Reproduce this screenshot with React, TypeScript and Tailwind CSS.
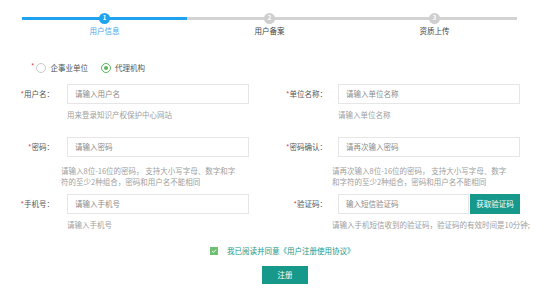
import React from 'react';

const font = { fontFamily: '"Noto Sans CJK SC", "Noto Sans", sans-serif' };

const steps = ['用户信息', '用户备案', '资质上传'];

const Stepper: React.FC = () => (
    <div className="ml-[22px] w-[495px] pt-[13px] flex">
        {steps.map((s, i) => {
            const active = i === 0;
            return (
                <div key={s} className="flex-1 flex flex-col items-center">
                    <div className="relative w-full h-[10px] flex items-center justify-center">
                        <div className={`absolute left-0 right-0 top-[3.5px] h-[3px] ${active ? 'bg-[#1fa3ee]' : 'bg-[#d3d3d3]'}`} />
                        <div className={`relative w-[11px] h-[11px] rounded-full flex items-center justify-center text-white text-[6px] leading-none font-bold ${active ? 'bg-[#1fa3ee]' : 'bg-[#cfcfcf]'}`}>
                            {i + 1}
                        </div>
                    </div>
                    <div className={`mt-[2px] text-[7.5px] leading-[12px] ${active ? 'text-[#4aa8ee]' : 'text-[#444]'}`}>{s}</div>
                </div>
            );
        })}
    </div>
);

const Star = () => <span className="text-[#e4393c]">*</span>;

// one form field: label + input + optional help text (lines broken as in the design)
const Field: React.FC<{
    label: string;
    placeholder: string;
    help?: string[];
    right?: boolean;
    button?: boolean;
    helpShift?: boolean;
}> = ({ label, placeholder, help, right, button, helpShift }) => (
    <div className="flex items-start">
        <div className={`${right ? 'w-[56px]' : 'w-[54px]'} h-[20px] flex items-center justify-end text-[7.5px] text-[#555] whitespace-nowrap`}>
            <Star />{label}：
        </div>
        <div className={`${right ? 'ml-[11px]' : 'ml-[13px]'} flex flex-col`}>
            <div className="flex w-[182px] h-[20px]">
                <div className="flex-1 border border-[#e6e6e6] bg-white flex items-center pl-[7px] text-[7.5px] text-[#8a8a8a]">
                    {placeholder}
                </div>
                {button && (
                    <div className="w-[50px] bg-[#16998a] text-white text-[7.5px] flex items-center justify-center ml-[1px]">
                        获取验证码
                    </div>
                )}
            </div>
            {help && (
                <div className={`${help.length > 1 ? 'mt-[8px]' : 'mt-[5px]'} text-[7.5px] leading-[11px] text-[#a0a0a0] whitespace-nowrap ${helpShift ? '-ml-[6px]' : ''}`}>
                    {help.map((l) => (
                        <div key={l}>{l}</div>
                    ))}
                </div>
            )}
        </div>
    </div>
);

const App: React.FC = () => {
    return (
        <div className="w-[554px] h-[288px] bg-white overflow-hidden" style={font}>
            <Stepper />

            {/* unit type radios */}
            <div className="mt-[25px] pl-[31px] flex items-center text-[7.5px] text-[#555] h-[12px]">
                <span className="text-[#e4393c] self-start -mt-[2px] mr-[1px]">*</span>
                <span className="w-[10px] h-[10px] rounded-full border border-[#c9c9c9] bg-white" />
                <span className="ml-[5px]">企事业单位</span>
                <span className="ml-[13px] w-[10px] h-[10px] rounded-full border border-[#5cb85c] flex items-center justify-center">
                    <span className="w-[4px] h-[4px] rounded-full bg-[#5cb85c]" />
                </span>
                <span className="ml-[4px]">代理机构</span>
            </div>

            <div className="mt-[10px] grid grid-cols-[270px_284px]">
                <div className="pb-[17px]">
                    <Field label="用户名" placeholder="请输入用户名" help={['用来登录知识产权保护中心网站']} />
                </div>
                <div className="pl-[1px] pb-[17px]">
                    <Field right label="单位名称" placeholder="请输入单位名称" help={['请输入单位名称']} />
                </div>

                <div className="pb-[7px]">
                    <Field label="密码" placeholder="请输入密码" helpShift help={['请输入8位-16位的密码， 支持大小写字母、数字和字', '符的至少2种组合，密码和用户名不能相同']} />
                </div>
                <div className="pl-[1px] pb-[7px]">
                    <Field right label="密码确认" placeholder="请再次输入密码" helpShift help={['请再次输入8位-16位的密码， 支持大小写字母、数字', '和字符的至少2种组合，密码和用户名不能相同']} />
                </div>

                <Field label="手机号" placeholder="请输入手机号" help={['请输入手机号']} />
                <div className="pl-[1px]">
                    <Field right button label="验证码" placeholder="输入短信验证码" helpShift help={['请输入手机短信收到的验证码，验证码的有效时间是10分钟;']} />
                </div>
            </div>

            {/* agreement */}
            <div className="mt-[15px] pl-[210px] flex items-center text-[7.5px] h-[12px]">
                <span className="w-[8px] h-[8px] bg-[#6cc070] flex items-center justify-center">
                    <svg width="6" height="6" viewBox="0 0 6 6"><path d="M1 3.1 L2.4 4.4 L5 1.6" stroke="white" strokeWidth="0.9" fill="none" /></svg>
                </span>
                <span className="ml-[9px] text-[#16998a]">我已阅读并同意</span>
                <span className="text-[#16998a]">《用户注册使用协议》</span>
            </div>

            <div className="mt-[9px] pl-[262px]">
                <div className="w-[46px] h-[18px] bg-[#16998a] text-white text-[7.5px] flex items-center justify-center">注册</div>
            </div>
        </div>
    );
};

export default App;
